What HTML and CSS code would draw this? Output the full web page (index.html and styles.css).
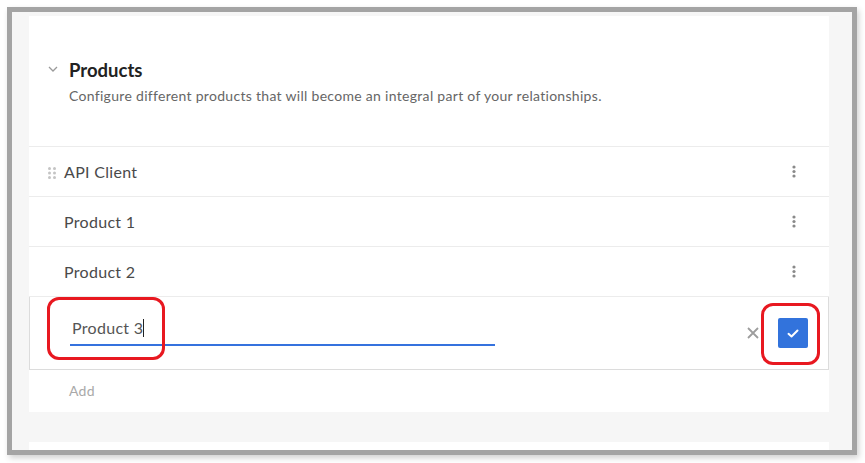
FILE: index.html
```html
<!DOCTYPE html>
<html>
<head>
<meta charset="utf-8">
<link rel="stylesheet" href="styles.css">
</head>
<body>
<div class="frame">
  <div class="canvas">
    <section class="card">
      <header class="card-head">
        <div class="title-line">
          <svg class="chevron" width="10" height="6" viewBox="0 0 10 6"><path d="M1 1 L5 5 L9 1" fill="none" stroke="#9a9a9a" stroke-width="1.3"/></svg>
          <h2 class="title">Products</h2>
        </div>
        <p class="desc">Configure different products that will become an integral part of your relationships.</p>
      </header>
      <div class="row">
        <svg class="handle" width="8" height="12" viewBox="0 0 8 12"><g fill="#c4c4c4"><circle cx="1.5" cy="1.5" r="1.5"/><circle cx="6.5" cy="1.5" r="1.5"/><circle cx="1.5" cy="6" r="1.5"/><circle cx="6.5" cy="6" r="1.5"/><circle cx="1.5" cy="10.5" r="1.5"/><circle cx="6.5" cy="10.5" r="1.5"/></g></svg>
        <span class="row-label">API Client</span>
        <svg class="kebab" width="4" height="13" viewBox="0 0 4 13"><g fill="#8a8a8a"><circle cx="2" cy="2" r="1.6"/><circle cx="2" cy="6.5" r="1.6"/><circle cx="2" cy="11" r="1.6"/></g></svg>
      </div>
      <div class="row">
        <span class="row-label">Product 1</span>
        <svg class="kebab" width="4" height="13" viewBox="0 0 4 13"><g fill="#8a8a8a"><circle cx="2" cy="2" r="1.6"/><circle cx="2" cy="6.5" r="1.6"/><circle cx="2" cy="11" r="1.6"/></g></svg>
      </div>
      <div class="row">
        <span class="row-label">Product 2</span>
        <svg class="kebab" width="4" height="13" viewBox="0 0 4 13"><g fill="#8a8a8a"><circle cx="2" cy="2" r="1.6"/><circle cx="2" cy="6.5" r="1.6"/><circle cx="2" cy="11" r="1.6"/></g></svg>
      </div>
      <div class="edit-row">
        <div class="input">Product 3<span class="caret"></span></div>
        <div class="actions">
          <svg class="cancel" width="12" height="12" viewBox="0 0 12 12"><path d="M1 1 L11 11 M11 1 L1 11" stroke="#9d9d9d" stroke-width="1.8" fill="none"/></svg>
          <button class="confirm"><svg width="12" height="9" viewBox="0 0 12 9"><path d="M1.5 4.8 L4.5 7.5 L10.5 1.5" stroke="#fff" stroke-width="2" fill="none" stroke-linecap="round" stroke-linejoin="round"/></svg></button>
        </div>
      </div>
      <div class="add">Add</div>
    </section>
    <section class="card next"></section>
    <div class="mark mark-input"></div>
    <div class="mark mark-btn"></div>
  </div>
</div>
</body>
</html>
```
FILE: styles.css
```css
* { box-sizing: border-box; }
html, body { margin: 0; padding: 0; background: #fff; }
body { font-family: Lato, "Noto Sans", sans-serif; width: 865px; height: 463px; overflow: hidden; }

.frame {
  margin: 7px 0 0 7px;
  width: 850px;
  height: 448px;
  border: 5px solid #a4a4a4;
  box-shadow: 2px 3px 6px rgba(0,0,0,0.18);
}
.canvas {
  position: relative;
  height: 100%;
  background: #f6f6f6;
  padding: 4px 23px 0 17px;
  overflow: hidden;
}
.card {
  background: #fff;
  display: flex;
  flex-direction: column;
}
.card-head {
  height: 131px;
  padding: 40px 0 0 19px;
  border-bottom: 1px solid #ececec;
}
.title-line { display: flex; align-items: center; gap: 10px; height: 28px; }
.chevron { margin-top: -3px; }
.title { margin: 0 0 0 1px; font-size: 18.5px; font-weight: 700; color: #222; }
.desc { margin: 3px 0 0 21px; font-size: 14px; letter-spacing: 0.3px; color: #666; }

.row {
  height: 50px;
  display: flex;
  align-items: center;
  padding: 0 33px 0 35px;
  border-bottom: 1px solid #ececec;
  position: relative;
}
.row-label { flex: 1; font-size: 16px; letter-spacing: 0.3px; color: #4a4a4a; }
.handle { position: absolute; left: 19px; top: 20px; }

.edit-row {
  height: 74px;
  margin-top: -1px;
  border: 1px solid #dcdcdc;
  display: flex;
  align-items: center;
  padding: 0 20px 0 40px;
}
.input {
  width: 425px;
  height: 32px;
  margin-top: -7px;
  border-bottom: 2px solid #3572de;
  font-size: 16px;
  letter-spacing: 0.3px;
  color: #555;
  padding: 3px 0 0 2px;
  line-height: 22px;
  display: flex;
  align-items: flex-start;
}
.caret { display: inline-block; width: 1px; height: 18px; margin-top: 2px; background: #222; }
.actions { margin-left: auto; display: flex; align-items: center; gap: 19px; }
.cancel { display: block; }
.confirm {
  width: 30px; height: 30px;
  border: 0; border-radius: 2px;
  background: #3273dc;
  display: flex; align-items: center; justify-content: center;
  padding: 0;
}
.add { height: 42px; padding: 12px 0 0 40px; font-size: 14px; letter-spacing: 0.3px; color: #a9a9a9; }

.card.next { margin-top: 30px; height: 40px; }

.mark {
  position: absolute;
  border: 3px solid #e81820;
  border-radius: 12px;
}
.mark-input { left: 35px; top: 285px; width: 118px; height: 63px; }
.mark-btn { left: 749px; top: 291px; width: 59px; height: 62px; }
```
